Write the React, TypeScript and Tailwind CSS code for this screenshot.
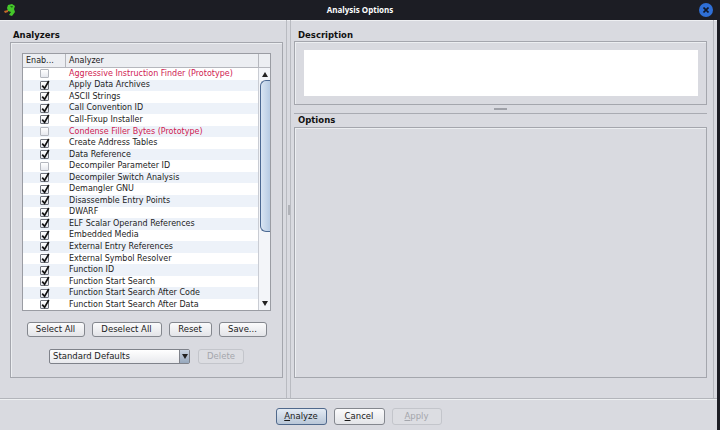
import React from "react";

const analyzers: [string, boolean, boolean][] = [
  ["Aggressive Instruction Finder (Prototype)", false, true],
  ["Apply Data Archives", true, false],
  ["ASCII Strings", true, false],
  ["Call Convention ID", true, false],
  ["Call-Fixup Installer", true, false],
  ["Condense Filler Bytes (Prototype)", false, true],
  ["Create Address Tables", true, false],
  ["Data Reference", true, false],
  ["Decompiler Parameter ID", false, false],
  ["Decompiler Switch Analysis", true, false],
  ["Demangler GNU", true, false],
  ["Disassemble Entry Points", true, false],
  ["DWARF", true, false],
  ["ELF Scalar Operand References", true, false],
  ["Embedded Media", true, false],
  ["External Entry References", true, false],
  ["External Symbol Resolver", true, false],
  ["Function ID", true, false],
  ["Function Start Search", true, false],
  ["Function Start Search After Code", true, false],
  ["Function Start Search After Data", true, false],
];

function CheckBox({ checked }: { checked: boolean }) {
  return (
    <span
      className={`relative flex h-[9px] w-[9px] items-center justify-center rounded-[1px] border bg-gradient-to-b from-white to-[#e6e8ee] ${
        checked ? "border-[#6f737c]" : "border-[#b4b7be]"
      }`}
    >
      {checked && (
        <svg width="9" height="10" viewBox="0 0 9 10" className="absolute -top-[2px] left-0">
          <path d="M1.2 5.6 L3.6 8.4 L7.8 1" fill="none" stroke="#111" strokeWidth="1.7" />
        </svg>
      )}
    </span>
  );
}

function Btn({
  children,
  w,
  disabled,
  primary,
}: {
  children: React.ReactNode;
  w: string;
  disabled?: boolean;
  primary?: boolean;
}) {
  return (
    <div
      className={`${w} flex h-full items-center justify-center rounded-[3px] border text-[8.5px] ${
        disabled
          ? "border-[#c3c5cb] bg-[#dcdde2] text-[#a4a6ac]"
          : primary
            ? "border-[#50698c] bg-gradient-to-b from-[#e4ebf4] to-[#b9c7d8] text-[#1a1a1a]"
            : "border-[#84878e] bg-gradient-to-b from-[#fbfbfc] to-[#e3e4e8] text-[#1a1a1a]"
      }`}
    >
      {children}
    </div>
  );
}

function Arrow({ up }: { up?: boolean }) {
  return (
    <svg width="6" height="5" viewBox="0 0 6 5">
      <path d={up ? "M0 5 L3 0 L6 5 Z" : "M0 0 L6 0 L3 5 Z"} fill="#222" />
    </svg>
  );
}

export default function App() {
  return (
    <div className="flex h-[430px] w-[720px] flex-col overflow-hidden bg-[#1c1d24] font-['DejaVu_Sans',sans-serif] text-[#1c1c1c]">
      {/* title bar */}
      <div className="relative flex h-[20px] shrink-0 items-center justify-center">
        <svg width="14" height="14" viewBox="0 0 14 14" className="absolute left-[3px] top-[3px]">
          <path d="M5 2 L9 1 L12 3 L11 6 L12 9 L9 13 L6 12 L8 9 L5 8 L4 5 Z" fill="#45c72a" />
          <path d="M7 3 L10 3 L9 5 Z" fill="#1f6d16" />
          <path d="M1 8 L5 7 L5 9 L2 10 Z" fill="#c26a2a" />
        </svg>
        <span className="font-['Open_Sans',sans-serif] text-[8px] font-bold text-white">
          Analysis Options
        </span>
        <div className="absolute right-[7px] top-[3px] flex h-[14px] w-[14px] items-center justify-center rounded-full bg-[#2f6fd6]">
          <svg width="6" height="6" viewBox="0 0 6 6">
            <path d="M0.5 0.5 L5.5 5.5 M5.5 0.5 L0.5 5.5" stroke="#101828" strokeWidth="1.6" />
          </svg>
        </div>
      </div>

      <div className="flex flex-1">
        <div className="flex w-[717px] flex-col bg-[#d9dae0] shadow-[inset_0_1px_0_#eeeff2]">
          {/* content */}
          <div className="flex h-[379px] shrink-0 pl-[10px]">
            {/* left column */}
            <div className="flex w-[273px] flex-col">
              <div className="h-[22px] pl-[3px] pt-[9px] text-[8.5px] font-bold leading-[12px] text-[#111]">
                Analyzers
              </div>
              <div className="flex h-[336px] flex-col border border-[#a4a6ad] px-[11px] pb-[13px] pt-[10px] shadow-[inset_1px_1px_0_#eceef1]">
                {/* table */}
                <div className="flex h-[258px] flex-col border border-[#9a9ca3] bg-white">
                  <div className="flex h-[14px] shrink-0 border-b border-[#b5b7bd] bg-[#eceef2] text-[8px] leading-[13px]">
                    <div className="w-[43px] border-r border-[#b5b7bd] pl-[3px]">Enab...</div>
                    <div className="flex-1 border-r border-[#b5b7bd] pl-[3px]">Analyzer</div>
                    <div className="w-[11px]" />
                  </div>
                  <div className="flex min-h-0 flex-1">
                    <div className="flex-1 overflow-hidden">
                      {analyzers.map(([name, on, proto], i) => (
                        <div
                          key={name}
                          className={`flex h-[11.55px] items-center text-[8px] ${
                            i % 2 === 1 ? "bg-[#edf2f9]" : "bg-white"
                          }`}
                        >
                          <div className="flex w-[43px] justify-center">
                            <CheckBox checked={on} />
                          </div>
                          <span className={`pl-[3px] ${proto ? "text-[#cf2152]" : ""}`}>{name}</span>
                        </div>
                      ))}
                    </div>
                    {/* scrollbar */}
                    <div className="flex w-[12px] flex-col border-l border-[#c9ccd3] bg-[#f3f5f9]">
                      <div className="flex h-[12px] items-center justify-center">
                        <Arrow up />
                      </div>
                      <div className="flex-1">
                        <div className="ml-[1px] h-[152px] rounded-l-[6px] border border-r-0 border-[#4d6a93] bg-gradient-to-r from-[#d9e5f3] to-[#b7cbe3]" />
                      </div>
                      <div className="flex h-[14px] items-center justify-center">
                        <Arrow />
                      </div>
                    </div>
                  </div>
                </div>

                <div className="mt-[11px] flex h-[15px] justify-center gap-[7px]">
                  <Btn w="w-[58px]">Select All</Btn>
                  <Btn w="w-[70px]">Deselect All</Btn>
                  <Btn w="w-[43px]">Reset</Btn>
                  <Btn w="w-[48px]">Save...</Btn>
                </div>

                <div className="mt-[12px] flex h-[15px] justify-center gap-[8px]">
                  <div className="flex w-[141px] items-stretch rounded-[2px] border border-[#7f828a] bg-gradient-to-b from-white to-[#e8e9ed] text-[8.5px]">
                    <span className="flex-1 pl-[3px] leading-[13px]">Standard Defaults</span>
                    <span className="flex w-[10px] items-center justify-center border-l border-[#7f828a] bg-gradient-to-b from-[#c9d4e2] to-[#97a8bd]">
                      <Arrow />
                    </span>
                  </div>
                  <Btn w="w-[46px]" disabled>
                    Delete
                  </Btn>
                </div>
              </div>
            </div>

            {/* vertical splitter */}
            <div className="flex w-[11px] justify-center">
              <div className="flex w-[5px] flex-col items-center justify-center border-x border-[#b9bbc1]">
                <div className="h-[10px] w-[2px] bg-[#b0b2b8]" />
              </div>
            </div>

            {/* right column */}
            <div className="flex w-[413px] flex-col">
              <div className="h-[21px] pl-[4px] pt-[9px] text-[8.5px] font-bold leading-[12px] text-[#111]">
                Description
              </div>
              <div className="h-[64px] border border-[#a4a6ad] pb-[8px] pl-[9px] pr-[8px] pt-[8px] shadow-[inset_1px_1px_0_#eceef1]">
                <div className="h-full bg-white" />
              </div>
              <div className="flex h-[9px] flex-col items-center justify-center border-b border-[#a9abb2]">
                <div className="h-[2px] w-[13px] border-y border-[#9fa1a8]" />
              </div>
              <div className="h-[13px] pl-[4px] text-[8.5px] font-bold leading-[12px] text-[#111]">
                Options
              </div>
              <div className="h-[251px] border border-[#a4a6ad] shadow-[inset_1px_1px_0_#eceef1]" />
            </div>
            <div className="ml-[6px] w-[1px] bg-[#b8bac0]" />
          </div>

          {/* bottom bar */}
          <div className="flex flex-1 justify-center gap-[7px] border-t border-[#eef0f2] pb-[5px] pt-[8px] shadow-[0_-1px_0_#b3b5bb]">
            <div className="h-[17px]">
              <Btn w="w-[51px]" primary>
                <span>
                  <u>A</u>nalyze
                </span>
              </Btn>
            </div>
            <div className="h-[17px]">
              <Btn w="w-[51px]">
                <span>
                  <u>C</u>ancel
                </span>
              </Btn>
            </div>
            <div className="h-[17px]">
              <Btn w="w-[50px]" disabled>
                <span>
                  <u>A</u>pply
                </span>
              </Btn>
            </div>
          </div>
        </div>
        <div className="flex-1 bg-[#1c1d24]" />
      </div>
    </div>
  );
}
